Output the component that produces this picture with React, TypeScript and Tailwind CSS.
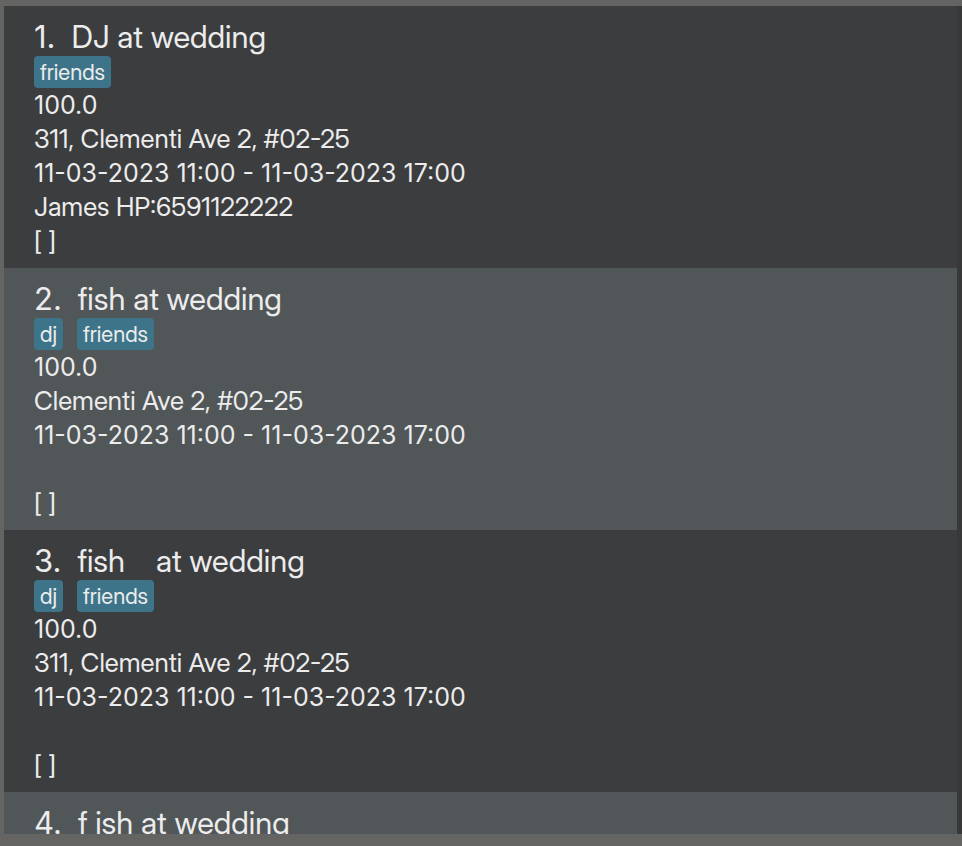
type Booking = {
  id: number;
  title: string;
  tags: string[];
  rate: string;
  address: string;
  period: string;
  contact: string;
};

const PERIOD = "11-03-2023 11:00 - 11-03-2023 17:00";

const bookings: Booking[] = [
  {
    id: 1,
    title: "DJ at wedding",
    tags: ["friends"],
    rate: "100.0",
    address: "311, Clementi Ave 2, #02-25",
    period: PERIOD,
    contact: "James HP:6591122222",
  },
  {
    id: 2,
    title: "fish at wedding",
    tags: ["dj", "friends"],
    rate: "100.0",
    address: "Clementi Ave 2, #02-25",
    period: PERIOD,
    contact: "",
  },
  {
    id: 3,
    title: "fish    at wedding",
    tags: ["dj", "friends"],
    rate: "100.0",
    address: "311, Clementi Ave 2, #02-25",
    period: PERIOD,
    contact: "",
  },
  { id: 4, title: "f ish at wedding", tags: [], rate: "", address: "", period: "", contact: "" },
];

function BookingCard({ booking }: { booking: Booking }) {
  return (
    <li className="shrink-0 bg-[#3c3d3f] pt-3 pb-2.5 pl-[30px] even:bg-[#515658]">
      <h2 className="flex gap-4 text-[31px] leading-[38px]">
        <span className="font-['Inter',sans-serif]">{booking.id}.</span>
        <span className="whitespace-pre">{booking.title}</span>
      </h2>
      <div className="flex h-8 gap-3.5">
        {booking.tags.map((tag) => (
          <span key={tag} className="rounded-sm bg-[#3e7489] px-1.5 text-[22px] leading-8">
            {tag}
          </span>
        ))}
      </div>
      <div className="text-[26px] leading-[34px]">
        <p className="h-[34px] font-['Inter',sans-serif] text-[25px]">{booking.rate}</p>
        <p className="h-[34px]">{booking.address}</p>
        <p className="h-[34px] font-['Inter',sans-serif] text-[25px]">{booking.period}</p>
        <p className="h-[34px]">{booking.contact}</p>
        <p className="h-[34px]">[ ]</p>
      </div>
    </li>
  );
}

export default function App() {
  return (
    <main className="flex h-screen flex-col bg-[#646462] pt-1.5 pb-3 pl-1 font-['Inter_Display','Inter',sans-serif] text-[#ececec]">
      <div className="flex min-h-0 flex-1 bg-[#383838] pr-[5px]">
        <ul className="flex min-w-0 flex-1 flex-col overflow-hidden">
          {bookings.map((booking) => (
            <BookingCard key={booking.id} booking={booking} />
          ))}
        </ul>
      </div>
    </main>
  );
}
